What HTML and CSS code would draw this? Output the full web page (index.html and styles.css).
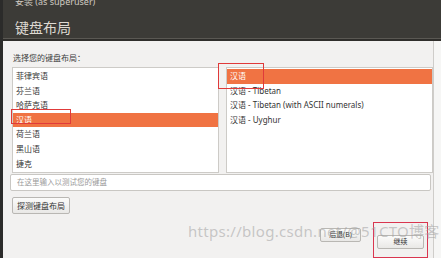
FILE: index.html
```html
<!DOCTYPE html>
<html lang="zh-CN">
<head>
<meta charset="utf-8">
<title>键盘布局</title>
<link rel="stylesheet" href="styles.css">
</head>
<body>
<div class="win">
  <header class="titlebar">
    <div class="wtitle">安装 (as superuser)</div>
    <h1 class="heading">键盘布局</h1>
  </header>
  <div class="rule"></div>
  <div class="body">
    <main class="content">
      <div class="label">选择您的键盘布局：</div>
      <div class="lists">
        <ul class="list">
          <li>菲律宾语</li>
          <li>芬兰语</li>
          <li>哈萨克语</li>
          <li class="sel">汉语</li>
          <li>荷兰语</li>
          <li>黑山语</li>
          <li>捷克</li>
        </ul>
        <ul class="list">
          <li class="sel">汉语</li>
          <li>汉语 - Tibetan</li>
          <li>汉语 - Tibetan (with ASCII numerals)</li>
          <li>汉语 - Uyghur</li>
        </ul>
      </div>
      <div class="input">在这里输入以测试您的键盘</div>
      <div class="btnrow"><span class="btn">探测键盘布局</span></div>
      <div class="actions">
        <span class="btn back">后退(B)</span>
        <span class="redwrap"><span class="btn next">继续</span></span>
      </div>
      <div class="mark mark-left"></div>
      <div class="mark mark-right"></div>
      <div class="watermark">https://blog.csdn.net/@51CTO博客</div>
    </main>
    <div class="rstrip"></div>
  </div>
</div>
</body>
</html>
```
FILE: styles.css
```css
html, body {
  margin: 0;
  padding: 0;
}
body {
  width: 441px;
  height: 258px;
  overflow: hidden;
  background: #f2f1f0;
  font-family: "Noto Sans", "Noto Sans CJK SC", sans-serif;
}
.win {
  height: 258px;
  border-left: 3px solid #2b2b2a;
  display: flex;
  flex-direction: column;
}
.titlebar {
  height: 48px;
  background: #3c3b37;
  border-bottom: 1px solid #5a5853;
  overflow: hidden;
}
.wtitle {
  margin-top: -3px;
  padding-left: 12px;
  font-size: 9px;
  line-height: 9px;
  color: #cfcac1;
}
.heading {
  margin: 15px 0 0 0;
  padding-left: 12px;
  font-size: 14px;
  line-height: 14px;
  font-weight: normal;
  color: #dedad3;
}
.rule {
  height: 3px;
  background: #2f2e2b;
}
.body {
  flex: 1;
  display: flex;
}
.content {
  position: relative;
  width: 428px;
  padding: 12px 2px 0 7px;
  box-sizing: border-box;
  width: 430px;
}
.rstrip {
  flex: 1;
  border-left: 1px solid #cfcdca;
  background: #f6f6f5;
}
.label {
  font-size: 8px;
  line-height: 10px;
  color: #3c3c3c;
  padding-left: 3px;
  margin-bottom: 4px;
}
.lists {
  display: grid;
  grid-template-columns: 207px 207px;
  gap: 7px;
  padding-left: 2px;
}
.list {
  margin: 0;
  padding: 1px 0 0 0;
  list-style: none;
  height: 103px;
  background: #fff;
  border: 1px solid #cdcbc7;
  overflow: hidden;
}
.list li {
  height: 14.6px;
  line-height: 14.6px;
  font-size: 8px;
  color: #333;
  padding-left: 3px;
  white-space: nowrap;
}
.list li.sel {
  background: #f07343;
  color: #fff;
}
.input {
  margin-top: 1px;
  height: 15px;
  border: 1px solid #c9c7c3;
  border-radius: 2px;
  background: #fff;
  font-size: 7.5px;
  line-height: 15px;
  color: #9a9a9a;
  padding-left: 6px;
}
.btnrow {
  margin-top: 6px;
  padding-left: 2px;
  display: flex;
}
.btn {
  display: inline-block;
  height: 15px;
  line-height: 15px;
  padding: 0 4px;
  font-size: 8px;
  color: #333;
  background: linear-gradient(#fbfbfa, #e9e8e6);
  border: 1px solid #b9b7b3;
  border-radius: 2px;
}
.actions {
  margin-top: 8px;
  display: flex;
  justify-content: flex-end;
  align-items: flex-start;
  padding-right: 3px;
}
.back {
  margin-top: 6px;
  margin-right: 12px;
  width: 31px;
  height: 12px;
  line-height: 12px;
  text-align: center;
  font-size: 7px;
}
.redwrap {
  display: block;
  border: 1.5px solid #d9364f;
  padding: 4px 3px 8px 3px;
}
.next {
  width: 37px;
  height: 12px;
  line-height: 12px;
  text-align: center;
  font-size: 7px;
}
.mark {
  position: absolute;
  border: 1.5px solid #e03a3a;
}
.mark-left {
  left: 8px;
  top: 68px;
  width: 58px;
  height: 13px;
}
.mark-right {
  left: 215px;
  top: 22px;
  width: 44px;
  height: 24px;
}
.watermark {
  position: absolute;
  left: 185px;
  top: 181px;
  font-size: 15px;
  line-height: 18px;
  color: rgba(160, 160, 160, 0.55);
  white-space: nowrap;
  letter-spacing: 0.3px;
}
```
